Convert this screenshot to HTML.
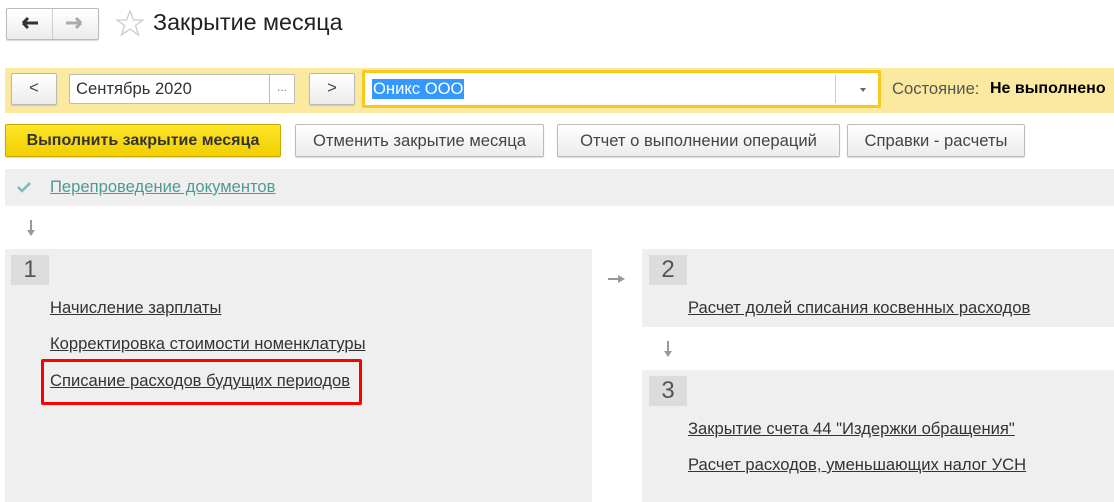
<!DOCTYPE html>
<html><head><meta charset="utf-8"><style>
*{box-sizing:border-box;margin:0;padding:0}
body{width:1114px;height:502px;background:#fff;font-family:"Liberation Sans",Arial,sans-serif;font-size:16.6px;color:#333;position:relative;overflow:hidden}
.a{position:absolute;white-space:nowrap}
.btn{position:absolute;border:1px solid #bbb;border-radius:2px;background:linear-gradient(#fff,#ececec);box-shadow:0 1px 1px rgba(0,0,0,.15);text-align:center;color:#444;white-space:nowrap}
a{color:#333;text-decoration:underline}
.num{position:absolute;width:38px;height:30px;background:#dcdcdc;font-size:24px;color:#555;text-align:center;line-height:30px}
.panel{position:absolute;background:#efefef}
</style></head><body>
<div class="btn" style="left:6px;top:8px;width:93px;height:32px"></div>
<div class="a" style="left:52px;top:9px;width:1px;height:30px;background:#ccc"></div>
<svg class="a" style="left:20px;top:15px" width="20" height="16"><path d="M3 8H18M3 8L8 3M3 8L8 13" stroke="#333" stroke-width="3" fill="none"/></svg>
<svg class="a" style="left:64px;top:15px" width="20" height="16"><path d="M2 8H17M17 8L12 3M17 8L12 13" stroke="#aaa" stroke-width="3" fill="none"/></svg>
<svg class="a" style="left:115px;top:9px" width="30" height="28"><path d="M15 2L18.5 11H28L20.5 16.5L23.5 26L15 20L6.5 26L9.5 16.5L2 11H11.5Z" fill="none" stroke="#ccc" stroke-width="1.3"/></svg>
<div class="a" style="left:153px;top:9px;font-size:23.3px;color:#222">Закрытие месяца</div>

<div class="a" style="left:5px;top:68px;width:1109px;height:45px;background:#fbe9a0"></div>
<div class="btn" style="left:11px;top:73px;width:46px;height:32px;line-height:28px">&lt;</div>
<div class="a" style="left:69px;top:74px;width:226px;height:30px;background:#fff;border:1px solid #bbb;border-radius:2px;padding:4px 6px;color:#333">Сентябрь 2020</div>
<div class="a" style="left:269px;top:75px;width:1px;height:28px;background:#bbb"></div>
<div class="a" style="left:277px;top:80px;color:#777;font-size:12px">...</div>
<div class="btn" style="left:309px;top:73px;width:46px;height:32px;line-height:28px">&gt;</div>
<div class="a" style="left:362px;top:70px;width:519px;height:38px;background:#fff;border:3px solid #f8c81c;border-radius:2px"></div>
<div class="a" style="left:372px;top:79px;background:#3399ff;color:#fff;padding:0 1px;line-height:20px">Оникс ООО</div>
<div class="a" style="left:835px;top:75px;width:1px;height:28px;background:#ccc"></div>
<div class="a" style="left:860px;top:88px;width:0;height:0;border-left:3px solid transparent;border-right:3px solid transparent;border-top:4px solid #666"></div>
<div class="a" style="left:892px;top:79px;color:#555">Состояние:</div>
<div class="a" style="left:990px;top:80px;color:#000;font-weight:bold;font-size:16px">Не выполнено</div>

<div class="btn" style="left:5px;top:124px;width:276px;height:33px;line-height:31px;background:linear-gradient(#fde428,#f2cf00);border-color:#c9a800;color:#333;font-weight:bold;font-size:16px">Выполнить закрытие месяца</div>
<div class="btn" style="left:295px;top:124px;width:249px;height:33px;line-height:31px">Отменить закрытие месяца</div>
<div class="btn" style="left:557px;top:124px;width:283px;height:33px;line-height:31px">Отчет о выполнении операций</div>
<div class="btn" style="left:847px;top:124px;width:178px;height:33px;line-height:31px">Справки - расчеты</div>

<div class="a" style="left:5px;top:169px;width:1109px;height:37px;background:#efefef"></div>
<svg class="a" style="left:16px;top:180px" width="16" height="14"><path d="M2 7L6 11L14 3" stroke="#7bbdb5" stroke-width="2.5" fill="none"/></svg>
<div class="a" style="left:50px;top:177px"><a style="color:#4f9a96">Перепроведение документов</a></div>

<svg class="a" style="left:25px;top:219px" width="12" height="18"><path d="M6 1V13" stroke="#999" stroke-width="2"/><path d="M2 11L6 17L10 11Z" fill="#999"/></svg>

<div class="panel" style="left:5px;top:249px;width:587px;height:253px"></div>
<div class="num" style="left:11px;top:255px">1</div>
<div class="a" style="left:50px;top:298px"><a>Начисление зарплаты</a></div>
<div class="a" style="left:50px;top:334px"><a>Корректировка стоимости номенклатуры</a></div>
<div class="a" style="left:50px;top:371px"><a>Списание расходов будущих периодов</a></div>
<div class="a" style="left:41px;top:359px;width:321px;height:46px;border:3px solid #f00;border-radius:2px"></div>

<svg class="a" style="left:607px;top:273px" width="20" height="12"><path d="M1 6H13" stroke="#999" stroke-width="2"/><path d="M11 2L18 6L11 10Z" fill="#999"/></svg>

<div class="panel" style="left:642px;top:249px;width:472px;height:78px"></div>
<div class="num" style="left:649px;top:255px">2</div>
<div class="a" style="left:688px;top:298px"><a>Расчет долей списания косвенных расходов</a></div>

<svg class="a" style="left:662px;top:340px" width="12" height="18"><path d="M6 1V13" stroke="#999" stroke-width="2"/><path d="M2 11L6 17L10 11Z" fill="#999"/></svg>

<div class="panel" style="left:642px;top:370px;width:472px;height:132px"></div>
<div class="num" style="left:649px;top:376px">3</div>
<div class="a" style="left:688px;top:419px"><a>Закрытие счета 44 "Издержки обращения"</a></div>
<div class="a" style="left:688px;top:455px"><a>Расчет расходов, уменьшающих налог УСН</a></div>
</body></html>
